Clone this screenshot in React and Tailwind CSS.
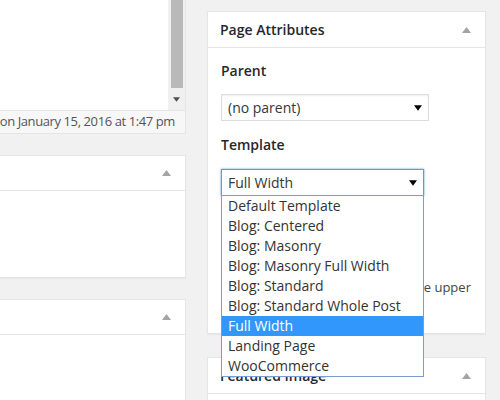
import React from 'react'

const templates = [
  'Default Template',
  'Blog: Centered',
  'Blog: Masonry',
  'Blog: Masonry Full Width',
  'Blog: Standard',
  'Blog: Standard Whole Post',
  'Full Width',
  'Landing Page',
  'WooCommerce',
]

function Caret({ up = false, className = '' }) {
  return (
    <svg width="9" height="6" viewBox="0 0 9 6" className={className}>
      {up ? <path d="M4.5 0L9 6H0z" fill="currentColor" /> : <path d="M0 0h9L4.5 6z" fill="currentColor" />}
    </svg>
  )
}

function Select({ value, width, focused }) {
  return (
    <div
      className={`h-[27px] flex items-center justify-between pl-[6px] pr-[6px] bg-white text-[14px] text-[#32373c] border ${
        focused ? 'border-[#5b9dd9] shadow-[0_0_2px_rgba(30,140,190,0.8)]' : 'border-[#ddd] shadow-[inset_0_1px_2px_rgba(0,0,0,0.07)]'
      }`}
      style={{ width }}
    >
      <span>{value}</span>
      <Caret className="text-black w-[8px] h-[6px]" />
    </div>
  )
}

function BoxHeader({ title }) {
  return (
    <div className="h-[36px] border-b border-[#e5e5e5] flex items-center justify-between pl-[12px] pr-[14px]">
      <span className="text-[14px] font-semibold text-[#23282d]">{title}</span>
      <Caret up className="text-[#a0a5aa]" />
    </div>
  )
}

export default function App() {
  return (
    <div className="relative w-[500px] h-[400px] overflow-hidden bg-[#f1f1f1] flex font-['Open_Sans',sans-serif]">
      {/* left column */}
      <div className="w-[186px] flex flex-col shrink-0">
        <div className="bg-white border-r border-b border-[#e5e5e5]">
          <div className="h-[110px] flex justify-end">
            <div className="w-[17px] bg-[#f0f0f0] flex flex-col items-center">
              <div className="w-[12px] h-[88px] bg-[#b9b9b9]" />
              <Caret className="text-[#505050] w-[7px] h-[5px] mt-[9px]" />
            </div>
          </div>
          <div className="h-[23px] bg-[#f7f7f7] border-t border-[#e5e5e5] flex items-center justify-end pr-[10px] overflow-hidden whitespace-nowrap text-[13px] tracking-[-0.4px] text-[#555]">
            <span>Last edited by admin on January 15, 2016 at 1:47 pm</span>
          </div>
        </div>
        <div className="mt-[21px] h-[123px] bg-white border border-l-0 border-[#e5e5e5] shadow-[0_1px_1px_rgba(0,0,0,0.04)] flex flex-col">
          <div className="h-[35px] border-b border-[#e5e5e5] flex items-center justify-end pr-[14px]">
            <Caret up className="text-[#a0a5aa]" />
          </div>
        </div>
        <div className="mt-[21px] flex-1 bg-white border border-l-0 border-b-0 border-[#e5e5e5]">
          <div className="h-[35px] border-b border-[#e5e5e5] flex items-center justify-end pr-[14px]">
            <Caret up className="text-[#a0a5aa]" />
          </div>
        </div>
      </div>

      {/* right column */}
      <div className="ml-[21px] w-[279px] pt-[11px] flex flex-col shrink-0">
        <div className="h-[323px] bg-white border border-[#e5e5e5] shadow-[0_1px_1px_rgba(0,0,0,0.04)]">
          <BoxHeader title="Page Attributes" />
          <div className="px-[13px] pt-[13px] text-[#23282d]">
            <div className="text-[14px] font-semibold leading-[20px]">Parent</div>
            <div className="mt-[13px]">
              <Select value="(no parent)" width={208} />
            </div>
            <div className="mt-[14px] text-[14px] font-semibold leading-[20px]">Template</div>
            <div className="mt-[14px]">
              <Select value="Full Width" width={203} focused />
            </div>
            <div className="mt-[13px] text-[14px] font-semibold leading-[20px]">Order</div>
            <div className="mt-[4px] w-[60px] h-[28px] border border-[#ddd] text-[14px] pl-[6px] flex items-center">0</div>
            <p className="mt-[16px] text-[13px] leading-[20px] text-[#444]">
              Need help? Use the Help tab in the upper right of your screen.
            </p>
          </div>
        </div>
        <div className="mt-[23px] flex-1 bg-white border border-b-0 border-[#e5e5e5]">
          <BoxHeader title="Featured Image" />
        </div>
      </div>

      {/* open template dropdown */}
      <div className="absolute left-[221px] top-[195px] w-[203px] bg-white border border-[#7a9cd3] text-[14px] text-[#333]">
        {templates.map((t, i) => (
          <div
            key={t}
            className={`h-[20px] leading-[20px] pl-[6px] whitespace-nowrap ${i === 6 ? 'bg-[#3297fd] text-white' : ''}`}
          >
            {t}
          </div>
        ))}
      </div>
    </div>
  )
}
